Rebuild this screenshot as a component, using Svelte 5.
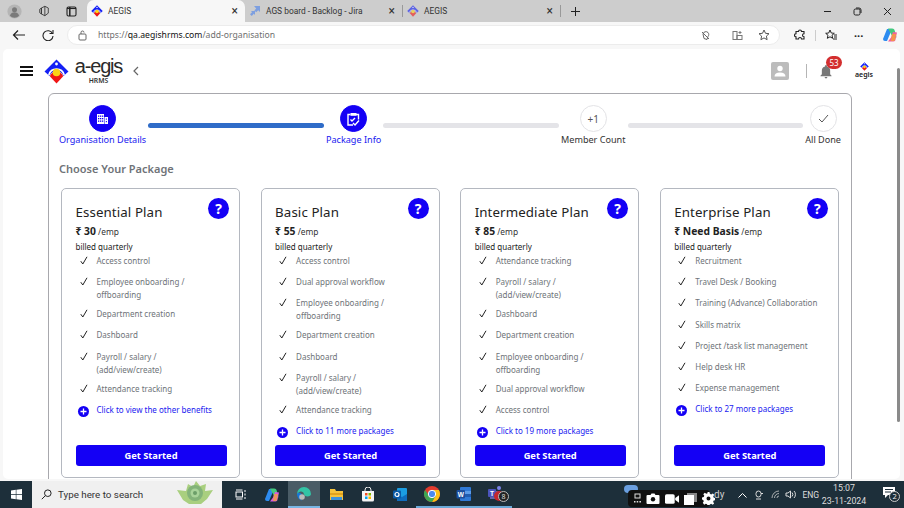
<script>
  const plans = [
    { name: 'Essential Plan', price: '30', items: ['Access control', ['Employee onboarding /', 'offboarding'], 'Department creation', 'Dashboard', ['Payroll / salary /', '(add/view/create)'], 'Attendance tracking'], more: 'Click to view the other benefits' },
    { name: 'Basic Plan', price: '55', items: ['Access control', 'Dual approval workflow', ['Employee onboarding /', 'offboarding'], 'Department creation', 'Dashboard', ['Payroll / salary /', '(add/view/create)'], 'Attendance tracking'], more: 'Click to 11 more packages' },
    { name: 'Intermediate Plan', price: '85', items: ['Attendance tracking', ['Payroll / salary /', '(add/view/create)'], 'Dashboard', 'Department creation', ['Employee onboarding /', 'offboarding'], 'Dual approval workflow', 'Access control'], more: 'Click to 19 more packages' },
    { name: 'Enterprise Plan', price: 'Need Basis', items: ['Recruitment', 'Travel Desk / Booking', 'Training (Advance) Collaboration', 'Skills matrix', 'Project /task list management', 'Help desk HR', 'Expense management'], more: 'Click to 27 more packages' }
  ];
</script>

{#snippet mark(size, op = 1)}
  <svg width={size} height={size} viewBox="0 0 25 25" opacity={op}>
    <path d="M12.500 .5L24.500 12.500 19.500 17a7.500 7.500 0 0 0-14 0L.5 12.500z" fill="#1420f5"/>
    <circle cx="12.500" cy="5" r="1.400" fill="#fff"/>
    <path d="M5.800 17.200a7.300 7.300 0 0 1 13.400 0L12.500 24.500z" fill="#f01616"/>
    <path d="M4.800 16a8 8 0 0 1 15.400 0" fill="none" stroke="#fff" stroke-width="1.600"/>
    <circle cx="12.500" cy="13.500" r="3.800" fill="#fbd316"/>
  </svg>
{/snippet}

{#snippet copilot(size, c3 = '#f0609a')}
  <svg width={size} height={size} viewBox="0 0 16 16"><path d="M5 2h5l-2 5-3 7H3a2 2 0 0 1-2-2z" fill="#2d8cf0"/><path d="M6 1.500h4c2 0 2.500 1 3 3l1.500 6-4-.5-2-4z" fill="#43c97e"/><path d="M11 5l4 .5-1.500 7a2 2 0 0 1-2 2H6l3-4z" fill={c3}/><path d="M10 7h4l-1 6a2 2 0 0 1-2 1H9z" fill="#f5a33a" opacity=".8"/></svg>
{/snippet}

<div class="screen">
  <div class="tabstrip">
    <div class="strip-left">
      <svg width="15" height="15" viewBox="0 0 18 18"><circle cx="9" cy="9" r="8.500" fill="#b5b5b5"/><circle cx="9" cy="7" r="3" fill="#7a7a7a"/><path d="M3.500 14c1-3 3-4 5.500-4s4.500 1 5.500 4a7.500 7.500 0 0 1-11 0z" fill="#7a7a7a"/></svg>
      <svg width="12" height="12" viewBox="0 0 14 14" fill="none" stroke="#333" stroke-width="1"><path d="M4 3.500l4-2 4 2v6l-4 3-4-2z"/><path d="M2 5l2-1.500v7L2 9z"/><path d="M8 1.500v11"/></svg>
      <svg width="11" height="11" viewBox="0 0 11 11" fill="none" stroke="#222" stroke-width="1.100"><rect x="1" y="1" width="9" height="9" rx="1.500"/><path d="M3.800 1v9" stroke-width="1.500"/><path d="M1 2.500h9"/></svg>
    </div>
    <div class="tab active">
      <span class="fav">{@render mark(12)}</span>
      <span class="tt">AEGIS</span>
      <b class="x">×</b>
    </div>
    <div class="tab second">
      <svg class="fav" width="12" height="12" viewBox="0 0 12 12" fill="#7d9fe0"><path d="M5 1h6v6l-1.800-1.800-2 2L5.400 5.400l1.800-2z"/><path d="M2 6h4v4L4.800 8.800 2.800 11 1 9.200l2-2z"/></svg>
      <span class="tt">AGS board - Backlog - Jira</span>
      <b class="x">×</b>
    </div>
    <i class="sep"></i>
    <div class="tab third">
      <span class="fav">{@render mark(12, 0.6)}</span>
      <span class="tt">AEGIS</span>
      <b class="x">×</b>
    </div>
    <i class="sep"></i>
    <svg class="plus" width="11" height="11" viewBox="0 0 11 11" stroke="#222" stroke-width="1"><path d="M5.500 1v9M1 5.500h9"/></svg>
    <div class="winctl">
      <svg width="9" height="9" viewBox="0 0 9 9" stroke="#222"><path d="M1 4.500h7"/></svg>
      <svg width="9" height="9" viewBox="0 0 9 9" fill="none" stroke="#222"><rect x="1" y="2" width="6" height="6" rx="1.500"/><path d="M3 1h3a2 2 0 0 1 2 2v3"/></svg>
      <svg width="9" height="9" viewBox="0 0 9 9" stroke="#222"><path d="M1 1l7 7M8 1L1 8"/></svg>
    </div>
  </div>

  <div class="addr-row">
    <svg class="back" width="14" height="12" viewBox="0 0 14 12" fill="none" stroke="#222" stroke-width="1.200"><path d="M13 6H1.500M6 1.500L1.500 6 6 10.500"/></svg>
    <svg class="reload" width="12" height="12" viewBox="0 0 12 12" fill="none" stroke="#222" stroke-width="1.100"><path d="M10.500 4.500A5 5 0 1 0 11 7"/><path d="M11 1v3.500H7.500"/></svg>
    <div class="omnibox">
      <svg width="9" height="11" viewBox="0 0 9 11" fill="none" stroke="#666"><rect x="1" y="4" width="7" height="6" rx="1"/><path d="M3 4V2.500a1.500 1.500 0 0 1 3 0"/></svg>
      <span class="url"><span class="dim">https://</span>qa.aegishrms.com<span class="dim">/add-organisation</span></span>
      <span class="om-ic">
        <svg width="11" height="11" viewBox="0 0 11 11" fill="none" stroke="#666"><path d="M2 2l7 7M3 4a3 3 0 0 1 5-1.500c1 1 1 3 0 4l-1 3-3-1z"/></svg>
        <svg class="g2" width="11" height="11" viewBox="0 0 11 11" fill="none" stroke="#777"><rect x="1" y="1.500" width="4" height="8"/><rect x="5" y="5.500" width="5" height="4"/><path d="M8 1v3M6.500 2.500h3"/></svg>
        <svg class="g3" width="12" height="12" viewBox="0 0 12 12" fill="none" stroke="#555"><path d="M6 1l1.500 3.300 3.500.4-2.600 2.400.7 3.600L6 8.900 2.900 10.700l.7-3.600L1 4.700l3.500-.4z"/></svg>
      </span>
    </div>
    <div class="tools">
      <svg width="12" height="12" viewBox="0 0 12 12" fill="none" stroke="#222" stroke-width="1.100"><path d="M4.500 2.500a1.500 1.500 0 0 1 3 0H10v2.300a1.500 1.500 0 0 0 0 3V10H7.500a1.500 1.500 0 0 0-3 0H2V7.800a1.500 1.500 0 0 1 0-3V2.500z"/></svg>
      <i class="tsep"></i>
      <svg width="13" height="12" viewBox="0 0 13 12" fill="none" stroke="#222"><path d="M5 1l1.300 3 3 .3-2.300 2 .7 3L5 7.800 2.300 9.300l.7-3-2.300-2 3-.3z"/><path d="M9 6h3M9 8h3M8 10h4"/></svg>
      <span class="dots">···</span>
      {@render copilot(16)}
    </div>
  </div>

  <div class="page">
    <header class="topbar">
      <div class="burger"><i></i><i></i><i></i></div>
      <span class="logo">{@render mark(25)}</span>
      <div class="brand"><span class="word">a-egis</span><span class="hrms">HRMS</span></div>
      <svg class="chev" width="6" height="10" viewBox="0 0 6 10" fill="none" stroke="#666" stroke-width="1.200"><path d="M5 1L1 5l4 4"/></svg>
      <div class="top-right">
        <div class="avatar"><svg width="12" height="12" viewBox="0 0 12 12" fill="#fff"><circle cx="6" cy="3.500" r="2.700"/><path d="M.5 11.500c0-2.500 2-4 5.500-4s5.500 1.500 5.500 4z"/></svg></div>
        <i class="vline"></i>
        <div class="bell">
          <svg width="12" height="14" viewBox="0 0 13 15" fill="#777"><path d="M6.500 0a1 1 0 0 1 1 1v.6A4.500 4.500 0 0 1 11 6v4l1.500 1.500V12H.5v-.5L2 10V6a4.500 4.500 0 0 1 3.500-4.400V1a1 1 0 0 1 1-1z"/><path d="M5 13h3a1.500 1.500 0 0 1-3 0z"/></svg>
          <span class="badge">53</span>
        </div>
        <div class="mini">
          {@render mark(9)}
          <span>aegis</span>
        </div>
      </div>
    </header>

    <section class="box">
      <div class="stepper">
        <div class="step done"><span class="circle">
          <svg width="13" height="12" viewBox="0 0 13 12" fill="#fff"><path d="M1 1h7v10H1z"/><path d="M8.500 4H12v7H8.500z"/><g fill="#1400f5"><rect x="2" y="2.500" width="1.300" height="1.300"/><rect x="4" y="2.500" width="1.300" height="1.300"/><rect x="6" y="2.500" width="1.300" height="1.300"/><rect x="2" y="5" width="1.300" height="1.300"/><rect x="4" y="5" width="1.300" height="1.300"/><rect x="6" y="5" width="1.300" height="1.300"/><rect x="2" y="7.500" width="1.300" height="1.300"/><rect x="4" y="7.500" width="1.300" height="1.300"/><rect x="6" y="7.500" width="1.300" height="1.300"/><rect x="9.800" y="5.500" width="1.100" height="1.200"/><rect x="9.800" y="8" width="1.100" height="1.200"/></g></svg>
        </span><span class="lbl">Organisation Details</span></div>
        <i class="bar on"></i>
        <div class="step done"><span class="circle">
          <svg width="13" height="14" viewBox="0 0 13 14" fill="none" stroke="#fff" stroke-width="1.400"><path d="M3.500 2.500H1v10.500h5M9 2.500h2.500v5"/><rect x="3.500" y="1" width="6" height="2.800" fill="#fff" stroke="none"/><path d="M3.500 7.500l1.500 1.500 3-3M6 11l2 2 4-4.500"/></svg>
        </span><span class="lbl">Package Info</span></div>
        <i class="bar"></i>
        <div class="step"><span class="circle">+1</span><span class="lbl">Member Count</span></div>
        <i class="bar"></i>
        <div class="step"><span class="circle"><svg width="11" height="9" viewBox="0 0 11 9" fill="none" stroke="#555"><path d="M1 5l3 3 6-7"/></svg></span><span class="lbl">All Done</span></div>
      </div>

      <h2>Choose Your Package</h2>

      <div class="plans">
        {#each plans as p}
          <article class="plan">
            <div class="head">
              <h3>{p.name}</h3>
              <span class="q">?</span>
            </div>
            <div class="price"><b>₹ {p.price}</b> <span>/emp</span></div>
            <div class="billed">billed quarterly</div>
            <ul>
              {#each p.items as it}
                <li>
                  <svg class="chk" width="8" height="9" viewBox="0 0 8 9" fill="none" stroke="#222" stroke-width="1"><path d="M.8 5.200L2.800 8 7 .8"/></svg>
                  <span>{#if Array.isArray(it)}{it[0]}<br />{it[1]}{:else}{it}{/if}</span>
                </li>
              {/each}
              <li class="more">
                <span class="plus-c"><svg width="7" height="7" viewBox="0 0 7 7" stroke="#fff" stroke-width="1.300"><path d="M3.500 .5v6M.5 3.500h6"/></svg></span>
                <span>{p.more}</span>
              </li>
            </ul>
            <button>Get Started</button>
          </article>
        {/each}
      </div>
    </section>
    <i class="thumb"></i>
  </div>

  <footer class="taskbar">
    <svg class="win" width="11" height="11" viewBox="0 0 11 11" fill="#fff"><path d="M0 1.500L4.800.8v4.300H0zM5.400.7L11 0v5.100H5.400zM0 5.800h4.800v4.400L0 9.500zM5.400 5.800H11V11l-5.600-.8z"/></svg>
    <div class="search">
      <svg width="11" height="11" viewBox="0 0 11 11" fill="none" stroke="#222"><circle cx="6.800" cy="4.200" r="3.300"/><path d="M4.400 6.600L.8 10.200"/></svg>
      <span>Type here to search</span>
      <svg class="plant" width="38" height="26" viewBox="0 0 38 26"><path d="M1 9l9 1 2-7 5 3 3-6 4 5 6-2-1 7 8-1-6 9-6 5H13L7 19z" fill="#a9cf7f"/><circle cx="19" cy="12" r="8" fill="#83b37a"/><circle cx="19" cy="12" r="4.500" fill="#a8d39a"/><circle cx="19" cy="12" r="2" fill="#6b9e68"/></svg>
    </div>
    <div class="apps">
      <span class="app"><svg width="11" height="11" viewBox="0 0 11 11" fill="none" stroke="#fff"><rect x="1" y="3" width="6.500" height="5"/><path d="M1 1h6.500M1 10h6.500M10 1v2M10 4.500v2M10 8v2"/></svg></span>
      <span class="app">{@render copilot(16, '#d85ae0')}</span>
      <span class="app act"><svg width="16" height="16" viewBox="0 0 16 16"><path d="M1 8a7 7 0 0 1 14 0c0 1.500-1.500 2.500-3.500 2.500S8 9.500 8 8a3 3 0 0 0-6 1z" fill="#32c3a5"/><path d="M1 8a7 7 0 0 0 5 6.700C4 13 3.500 10 6 8.500 4 6 1.500 6.500 1 8z" fill="#1677d8"/><circle cx="6" cy="11" r="2.800" fill="#bbb"/></svg></span>
      <span class="app"><svg width="15" height="13" viewBox="0 0 15 13"><path d="M1 1h5l1 2h7v9H1z" fill="#f5c33b"/><path d="M1 5h13v2H1z" fill="#e2a21c"/><rect x="2" y="9" width="11" height="3" fill="#3f92d8"/></svg></span>
      <span class="app"><svg width="14" height="15" viewBox="0 0 14 15"><path d="M1 4h12v9a1.500 1.500 0 0 1-1.500 1.500h-9A1.500 1.500 0 0 1 1 13z" fill="#f4f4f4"/><path d="M4 4V3a3 3 0 0 1 6 0v1" fill="none" stroke="#eee"/><rect x="4" y="6" width="2.500" height="2.500" fill="#f25022"/><rect x="7.500" y="6" width="2.500" height="2.500" fill="#7fba00"/><rect x="4" y="9.500" width="2.500" height="2.500" fill="#00a4ef"/><rect x="7.500" y="9.500" width="2.500" height="2.500" fill="#ffb900"/></svg></span>
      <span class="app"><svg width="16" height="15" viewBox="0 0 16 15"><rect x="5" y="1" width="10" height="13" rx="1" fill="#1b9de2"/><path d="M5 7l5 3 5-3v7H5z" fill="#0f6cbd"/><rect x="1" y="3.500" width="8" height="8" rx="1" fill="#0a5aa8"/><circle cx="5" cy="7.500" r="2" fill="none" stroke="#fff" stroke-width="1.200"/></svg></span>
      <span class="app line"><svg width="16" height="16" viewBox="0 0 16 16"><circle cx="8" cy="8" r="8" fill="#e33b2e"/><path d="M8 8L1.100 12A8 8 0 0 1 1.100 4L4.500 9z" fill="#3da853"/><path d="M8 16a8 8 0 0 0 6.900-12H8l3.500 6z" fill="#fbc116"/><path d="M1.100 12a8 8 0 0 0 6.900 4l3.500-6H4.500z" fill="#3da853"/><circle cx="8" cy="8" r="3.700" fill="#4a8af0" stroke="#fff"/></svg></span>
      <span class="app line"><svg width="16" height="16" viewBox="0 0 16 16"><rect x="4" y="1" width="11" height="14" rx="1" fill="#2f79d6"/><rect x="4" y="5" width="11" height="3" fill="#5b9be8"/><rect x="4" y="8" width="11" height="3" fill="#1f5cb0"/><rect x=".5" y="4" width="8.500" height="8.500" rx="1" fill="#1b4f9f"/><text x="4.700" y="10.800" class="w">W</text></svg></span>
      <span class="app line teams"><svg width="18" height="17" viewBox="0 0 18 17"><circle cx="12" cy="3" r="2" fill="#7b83eb"/><rect x="3" y="6" width="10" height="8" fill="#6264a7"/><rect x="1" y="4" width="8" height="8" rx="1" fill="#4b53bc"/><text x="5" y="10.500" class="w">T</text><circle cx="12" cy="11" r="5" fill="#c4262e"/></svg><em>8</em></span>
    </div>

    <div class="tray">
      <span class="weather"></span>
      <span class="dy">dy</span>
      <svg class="t1" width="9" height="6" viewBox="0 0 9 6" fill="none" stroke="#fff"><path d="M.5 5.500l4-4 4 4"/></svg>
      <svg class="t2" width="8" height="11" viewBox="0 0 8 11" fill="none" stroke="#ddd"><rect x="1" y="2" width="5" height="6" rx="2.500"/><path d="M1 10h5M6 4.500h2"/></svg>
      <svg class="t3" width="9" height="9" viewBox="0 0 9 9" fill="none" stroke="#ccc" stroke-width=".8"><path d="M8 1A7 7 0 0 0 1 8M8 3.500A4.500 4.500 0 0 0 3.500 8M8 6a2 2 0 0 0-2 2"/></svg>
      <svg class="t4" width="11" height="9" viewBox="0 0 11 9" fill="none" stroke="#ddd"><path d="M1 3v3h2l2.500 2V1L3 3zM7 2.500a3 3 0 0 1 0 4M9 1a5 5 0 0 1 0 7"/></svg>
      <span class="eng">ENG</span>
      <div class="clock"><span>15:07</span><span>23-11-2024</span></div>
      <span class="notif"><svg width="12" height="11" viewBox="0 0 12 11" fill="#fff"><path d="M0 0h12v8H5L2 11V8H0z"/><g stroke="#1d2f3a"><path d="M2 2.500h8M2 5h6"/></g></svg><em>2</em></span>
      <div class="capture">
        <svg width="7" height="11" viewBox="0 0 7 11" fill="#ddd"><rect x="1" y="1" width="5" height="4" fill="none" stroke="#ddd"/><path d="M0 8h1.500v1.500H0zM2.700 8h1.500v1.500H2.700zM5.400 8H7v1.500H5.400z"/></svg>
        <svg width="14" height="11" viewBox="0 0 13 11" fill="#fff"><path d="M1 2h3l1-1.500h3L9 2h3a1 1 0 0 1 1 1v7a1 1 0 0 1-1 1H1a1 1 0 0 1-1-1V3a1 1 0 0 1 1-1z"/><circle cx="6.500" cy="6.300" r="2.200" fill="#111"/></svg>
        <svg width="14" height="10" viewBox="0 0 13 9" fill="#fff"><rect width="9" height="9" rx="1.500"/><path d="M9.500 3.500L13 1v7L9.500 5.500z"/></svg>
        <svg width="13" height="12" viewBox="0 0 13 12"><rect x="3" y="0" width="10" height="9" fill="#888"/><rect x="0" y="2" width="10" height="10" fill="#fff"/></svg>
        <svg width="13" height="13" viewBox="0 0 13 13" fill="#fff"><path fill-rule="evenodd" d="M5.500 0h2l.4 1.800 1.300.6 1.600-1 1.400 1.400-1 1.600.6 1.300 1.700.4v2l-1.800.4-.6 1.300 1 1.600-1.400 1.400-1.600-1-1.300.6-.3 1.600h-2l-.4-1.700-1.300-.6-1.600 1L.8 10.800l1-1.600-.6-1.300L0 7.500v-2l1.700-.4.6-1.300-1-1.600L2.700.8l1.600 1 1.300-.6zM6.500 4.500a2 2 0 1 0 0 4 2 2 0 0 0 0-4z"/></svg>
      </div>
    </div>
  </footer>
</div>

<style>
  :global(body) { margin: 0; background: #f7f7f7; }
  .screen {
    width: 904px; height: 508px; overflow: hidden;
    display: flex; flex-direction: column;
    font-family: "Noto Sans", "Open Sans", sans-serif;
    background: #f7f7f7;
  }
  svg { display: block; flex: none; }

  .tabstrip { height: 22px; flex: none; background: #cdcdcd; display: flex; align-items: center; font: 8.400px Roboto, sans-serif; color: #333; }
  .strip-left { width: 87px; display: flex; align-items: center; gap: 16px; padding-left: 7px; box-sizing: border-box; }
  .tab { height: 22px; display: flex; align-items: center; box-sizing: border-box; padding: 0 7px 0 4px; gap: 5px; width: 157px; }
  .fav { flex: none; display: block; }
  .tab.active { background: #f7f7f7; border-radius: 7px 7px 0 0; width: 158px; }
  .tab.second { width: 157px; }
  .tt { flex: 1; white-space: nowrap; font-size: 8.400px; }
  .tab .x { font-weight: 400; font-size: 12px; line-height: 1; color: #333; }
  .sep { width: 1px; height: 12px; background: #999; flex: none; }
  .plus { margin-left: 9px; }
  .winctl { margin-left: auto; display: flex; gap: 21px; padding-right: 12px; }

  .addr-row { height: 27px; flex: none; display: flex; align-items: center; padding-bottom: 1px; box-sizing: border-box; background: #f7f7f7; }
  .back { margin-left: 12px; }
  .reload { margin-left: 16px; }
  .omnibox { margin-left: 13px; width: 713px; height: 20px; background: #fff; border-radius: 10px; border: 1px solid #ececec; display: flex; align-items: center; box-sizing: border-box; padding-left: 10px; font-size: 8.650px; }
  .url { margin-left: 11px; color: #111; white-space: nowrap; }
  .dim { color: #6f6f6f; }
  .om-ic { margin-left: auto; display: flex; align-items: center; padding-right: 9px; }
  .g2 { margin-left: 21px; }
  .g3 { margin-left: 15px; }
  .tools { display: flex; align-items: center; margin-left: 14px; gap: 9px; }
  .tsep { width: 1px; height: 11px; background: #ccc; }
  .dots { font-size: 11px; font-weight: 700; margin: 0 10px 0 7px; color: #222; line-height: 1; }

  .page { position: relative; flex: none; width: 897px; height: 430px; margin-left: 3px; background: #fff; border-radius: 5px; overflow: hidden; }
  .thumb { position: absolute; right: 0; top: 19px; width: 3.500px; height: 354px; background: #8a8a8a; border-radius: 2px; }
  .topbar { height: 44px; display: flex; align-items: center; }
  .burger { margin-left: 17px; width: 13px; display: flex; flex-direction: column; gap: 2.500px; flex: none; }
  .burger i { height: 1.500px; background: #111; display: block; }
  .logo { margin-left: 11px; display: block; flex: none; }
  .brand { margin: -1px 0 0 6px; display: flex; flex-direction: column; align-items: center; line-height: 1; width: 47px; flex: none; }
  .word { font-family: "Liberation Sans", sans-serif; font-size: 20px; letter-spacing: -1.200px; color: #2a2a2a; line-height: 19px; white-space: nowrap; }
  .hrms { font-size: 6.800px; font-weight: 600; color: #333; line-height: 9px; }
  .chev { margin-left: 11px; }
  .top-right { margin-left: auto; display: flex; align-items: center; padding-right: 27px; }
  .avatar { width: 18px; height: 18px; background: #bcbcbc; border-radius: 2px; display: flex; align-items: center; justify-content: center; }
  .vline { width: 1px; height: 14px; background: #b5b5b5; margin: 0 13px 0 17px; }
  .bell { position: relative; width: 12px; margin-right: 23px; margin-top: 2px; }
  .badge { position: absolute; left: 6px; top: -9px; width: 16px; height: 13px; border-radius: 7px; background: #d32f2f; color: #fff; font-size: 8px; line-height: 13px; text-align: center; }
  .mini { display: flex; flex-direction: column; align-items: center; width: 18px; margin-top: -1px; }
  .mini span { font-size: 7px; line-height: 8px; color: #222; font-weight: 600; }

  .box { margin-left: 45px; width: 804px; height: 420px; box-sizing: border-box; border: 1px solid #a8a8ad; border-radius: 6px; padding: 11px 10px 0 10px; }
  .stepper { display: flex; gap: 2px; align-items: flex-start; }
  .step { display: flex; flex-direction: column; align-items: center; flex: none; }
  .circle { width: 27px; height: 27px; border-radius: 50%; box-sizing: border-box; border: 1px solid #e3e3e6; display: flex; align-items: center; justify-content: center; font-size: 10px; color: #555; }
  .done .circle { background: #1400f5; border-color: #1400f5; }
  .lbl { font-size: 9.100px; line-height: 12px; margin-top: 2px; color: #333; white-space: nowrap; }
  .done .lbl { color: #1a1af0; }
  .bar { flex: 1; height: 5px; margin-top: 18px; border-radius: 3px; background: #e4e4e8; }
  .bar.on { background: #2f6cc8; }

  h2 { margin: 15px 0 0 0; font-size: 11px; line-height: 15px; font-weight: 600; color: #6f7378; }
  .plans { display: flex; gap: 20.600px; margin: 12px 0 0 2px; }
  .plan { width: 179px; height: 290px; flex: none; box-sizing: border-box; border: 1px solid #b4b8c0; border-radius: 5px; padding: 0 13px 0 13.500px; display: flex; flex-direction: column; }
  .head { height: 32px; flex: none; display: flex; align-items: flex-end; position: relative; }
  h3 { margin: 0; font-size: 13.300px; line-height: 17px; font-weight: 400; color: #222; letter-spacing: .1px; white-space: nowrap; }
  .q { position: absolute; right: -3px; top: 9px; width: 21px; height: 21px; border-radius: 50%; background: #1400f5; color: #fff; font-size: 14px; font-weight: 700; line-height: 21px; text-align: center; }
  .price { margin-top: 3px; font-size: 8.400px; line-height: 14px; color: #333; flex: none; }
  .price b { font-size: 10.300px; color: #222; }
  .billed { font-size: 8px; line-height: 13px; margin-top: 1px; color: #222; flex: none; }
  ul { list-style: none; margin: 1px 0 0 0; padding: 0; font-size: 8px; line-height: 13px; color: #6e7378; flex: none; }
  li { display: flex; min-height: 21.200px; padding-bottom: 6px; box-sizing: border-box; white-space: nowrap; }
  .chk { margin: 2px 0 0 4px; }
  li > span { margin-left: 9px; }
  .more { color: #1a1af0; }
  li > .plus-c { width: 11px; height: 11px; border-radius: 50%; background: #1400f5; display: flex; align-items: center; justify-content: center; margin: 3px 0 0 2px; flex: none; }
  .more > span:last-child { margin-left: 8px; }
  button { margin-top: auto; margin-bottom: 11px; height: 21px; width: 151px; flex: none; border: 0; border-radius: 3px; background: #1400f5; color: #fff; font: 700 9.300px/21px "Noto Sans", sans-serif; padding: 0; }

  .taskbar { margin-top: 2px; flex: none; height: 27px; display: flex; align-items: center; background: #1d2f3a; }
  .win { margin-left: 11px; }
  .search { margin-left: 10px; width: 190px; height: 27px; background: #f0f0f0; display: flex; align-items: center; box-sizing: border-box; padding-left: 9px; font: 9.800px Roboto, sans-serif; color: #333; position: relative; flex: none; }
  .search span { margin-left: 6px; white-space: nowrap; }
  .plant { position: absolute; left: 144px; top: 0; }
  .apps { display: flex; align-items: center; height: 27px; margin-left: 2px; flex: none; }
  .app { width: 32px; height: 27px; display: flex; align-items: center; justify-content: center; box-sizing: border-box; position: relative; }
  .act { background: #4a5c66; border-bottom: 2px solid #79b6e4; }
  .line { border-bottom: 2px solid #6aa9d8; }
  .w { font: 700 6.500px "Liberation Sans", sans-serif; fill: #fff; text-anchor: middle; }
  .teams em { position: absolute; left: 18px; top: 10px; width: 11px; height: 11px; border-radius: 50%; background: #222; border: 1px solid #bbb; box-sizing: border-box; color: #ddd; font: normal 7px/9px "Noto Sans", sans-serif; text-align: center; }
  .tray { flex: 1; display: flex; align-items: center; position: relative; height: 27px; color: #ddd; font: 8.500px Roboto, sans-serif; }
  .weather { margin-left: 112px; width: 14px; height: 8px; background: #6a9fe0; border-radius: 4px; margin-top: -12px; flex: none; }
  .dy { margin-left: 76px; color: #ccc; font-size: 10px; }
  .t1 { margin-left: 14px; }
  .t2 { margin-left: 8px; }
  .t3 { margin-left: 8px; }
  .t4 { margin-left: 5px; }
  .eng { margin-left: 6px; font-size: 8.500px; }
  .clock { margin-left: 2px; width: 46px; display: flex; flex-direction: column; align-items: center; font-size: 8.800px; line-height: 13px; flex: none; }
  .notif { position: relative; margin-left: 16px; display: block; flex: none; margin-top: -4px; }
  .notif em { position: absolute; left: 6px; top: 4px; width: 11px; height: 11px; border-radius: 50%; background: #1d2f3a; border: 1px solid #ccc; box-sizing: border-box; font: normal 7.500px/9px "Noto Sans", sans-serif; text-align: center; color: #eee; }
  .capture { position: absolute; left: 116px; top: 9px; width: 82px; height: 17px; background: #101010; border-radius: 4px; display: flex; align-items: center; gap: 5px; padding-left: 6px; box-sizing: border-box; }
</style>
